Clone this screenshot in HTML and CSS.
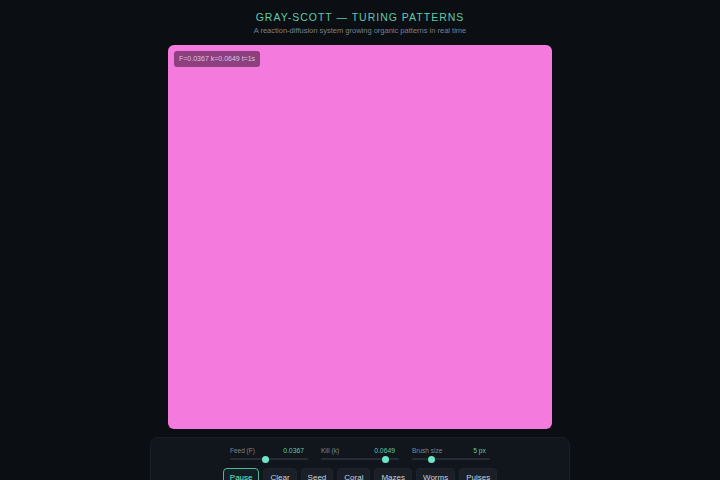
FILE: index.html
```
<!DOCTYPE html>
<html lang="en">
<head>
    <meta charset="UTF-8">
    <title>Gray-Scott — Turing Patterns</title>
    <link rel="stylesheet" href="styles.css">
</head>
<body>
    <header class="head">
        <h1>GRAY-SCOTT — TURING PATTERNS</h1>
        <p class="sub">A reaction-diffusion system growing organic patterns in real time</p>
    </header>
    <div class="stage">
        <canvas class="field" width="384" height="384"></canvas>
        <div class="badge">F=0.0367 k=0.0649 t=1s</div>
    </div>
    <div class="panel">
        <div class="sliders">
            <label class="ctl">
                <span class="row"><span class="name">Feed (F)</span><span class="val">0.0367</span></span>
                <input type="range" min="0.01" max="0.07" step="0.0001" value="0.0367">
            </label>
            <label class="ctl">
                <span class="row"><span class="name">Kill (k)</span><span class="val">0.0649</span></span>
                <input type="range" min="0.04" max="0.069" step="0.0001" value="0.0649">
            </label>
            <label class="ctl">
                <span class="row"><span class="name">Brush size</span><span class="val">5 px</span></span>
                <input type="range" min="2" max="15" step="1" value="5">
            </label>
        </div>
        <div class="buttons">
            <button class="on">Pause</button>
            <button>Clear</button>
            <button>Seed</button>
            <button>Coral</button>
            <button>Mazes</button>
            <button>Worms</button>
            <button>Pulses</button>
        </div>
    </div>
</body>
</html>
```
FILE: styles.css
```
body { margin: 0; padding-top: 11px; background: #0b0e13; font-family: "Liberation Sans", Arial, sans-serif; color: #c8d0dc; }
.head { text-align: center; }
h1 { margin: 0; font-size: 10.5px; line-height: 13px; font-weight: normal; letter-spacing: 1px; color: #5fcaab; }
.sub { margin: 2px 0 0; font-size: 7.5px; line-height: 10px; color: #7a808a; }
.stage { position: relative; width: 384px; height: 384px; margin: 9px auto 0; }
.field { display: block; width: 384px; height: 384px; border-radius: 6px; background: #f47bdd; }
.badge { position: absolute; left: 6px; top: 6px; padding: 0 5px; height: 16px; line-height: 16px; font-size: 7px; border-radius: 3px; background: rgba(70, 25, 65, 0.6); color: #dcc0d8; }
.panel { width: 418px; margin: 8px auto 0; padding: 9px 0 10px; background: #11151c; border: 1px solid #1b2028; border-radius: 8px; }
.sliders { display: grid; grid-template-columns: 78px 78px 78px; column-gap: 13px; justify-content: center; }
.ctl { display: block; }
.row { display: flex; justify-content: space-between; font-size: 6.5px; line-height: 8px; padding-right: 4px; }
.name { color: #7d8694; }
.val { color: #5fc9a9; font-size: 6.8px; }
input[type="range"] { -webkit-appearance: none; appearance: none; display: block; width: 78px; height: 8px; margin: 0; background: transparent; }
input[type="range"]::-webkit-slider-runnable-track { height: 2px; background: #262c36; border-radius: 1px; }
input[type="range"]::-webkit-slider-thumb { -webkit-appearance: none; width: 7px; height: 7px; margin-top: -2.5px; border-radius: 50%; background: #6ee7c8; border: none; }
.buttons { display: flex; justify-content: center; gap: 4px; margin-top: 5px; }
.buttons button { font-family: inherit; font-size: 8px; height: 18px; padding: 0 6px; border: 1px solid #1e242d; border-radius: 4px; background: #1a1f28; color: #c8d0dc; }
.buttons button.on { border-color: #4fb89c; color: #6ee7c8; background: #122026; }
```
